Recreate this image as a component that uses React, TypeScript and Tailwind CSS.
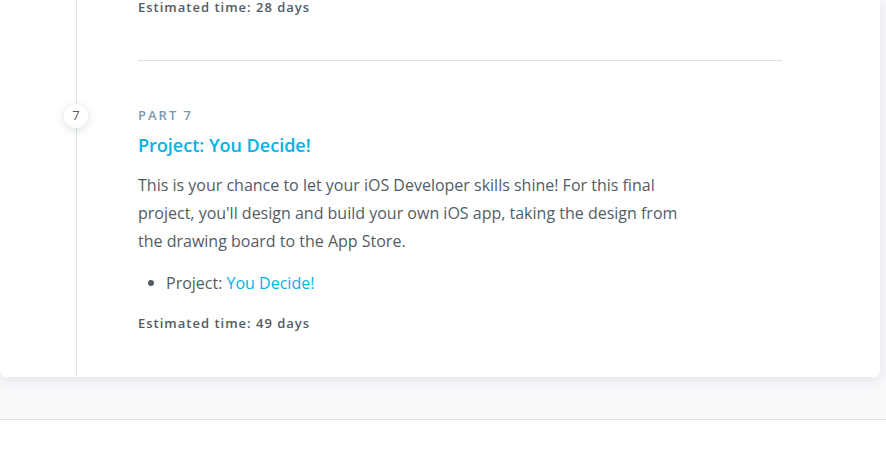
const font = { fontFamily: '"Open Sans", "Liberation Sans", sans-serif' };

const App = () => {
  return (
    <div className="w-[886px] h-[450px] overflow-hidden bg-white" style={font}>
      <div className="bg-[#f8f9fb] pr-[6px] pb-[42px] border-b border-[#dbe2e8]">
        <div className="relative bg-white rounded-b-md shadow-[0_2px_14px_rgba(46,60,73,0.12)]">
          {/* timeline rail */}
          <div className="absolute left-[76px] top-0 bottom-0 w-px bg-[#dbe2e8]" />

          <div className="pl-[138px] pr-[98px]">
            <p className="text-[13px] leading-[14px] font-semibold tracking-[1px] text-[#525c65]">
              Estimated time: 28 days
            </p>
            <div className="mt-[46px] border-t border-[#dbe2e8]" />
          </div>

          {/* part 7 */}
          <div className="relative pl-[138px] pt-[44px] pb-[44px]">
            <div className="absolute left-[64px] top-[43px] w-6 h-6 rounded-full bg-white shadow-[0_2px_8px_rgba(46,60,73,0.18)] flex items-center justify-center text-[13px] text-[#525c65]">
              7
            </div>
            <p className="text-[13px] leading-5 font-semibold tracking-[2px] text-[#7d97ad]">PART 7</p>
            <h3 className="mt-[8px] text-[18px] leading-6 font-semibold text-[#02b3e4]">
              Project: You Decide!
            </h3>
            <p className="mt-[14px] max-w-[560px] text-[16px] leading-[28px] text-[#525c65]">
              This is your chance to let your iOS Developer skills shine! For this final project, you'll design and
              build your own iOS app, taking the design from the drawing board to the App Store.
            </p>
            <ul className="mt-[14px]">
              <li className="flex items-center text-[16px] leading-[28px] text-[#525c65]">
                <span className="ml-[10px] mr-[12px] w-[6px] h-[6px] rounded-full bg-[#525c65]" />
                Project:&nbsp;<span className="text-[#02b3e4]">You Decide!</span>
              </li>
            </ul>
            <p className="mt-[16px] text-[13px] leading-5 font-semibold tracking-[1px] text-[#525c65]">
              Estimated time: 49 days
            </p>
          </div>
        </div>
      </div>
    </div>
  );
};

export default App;
